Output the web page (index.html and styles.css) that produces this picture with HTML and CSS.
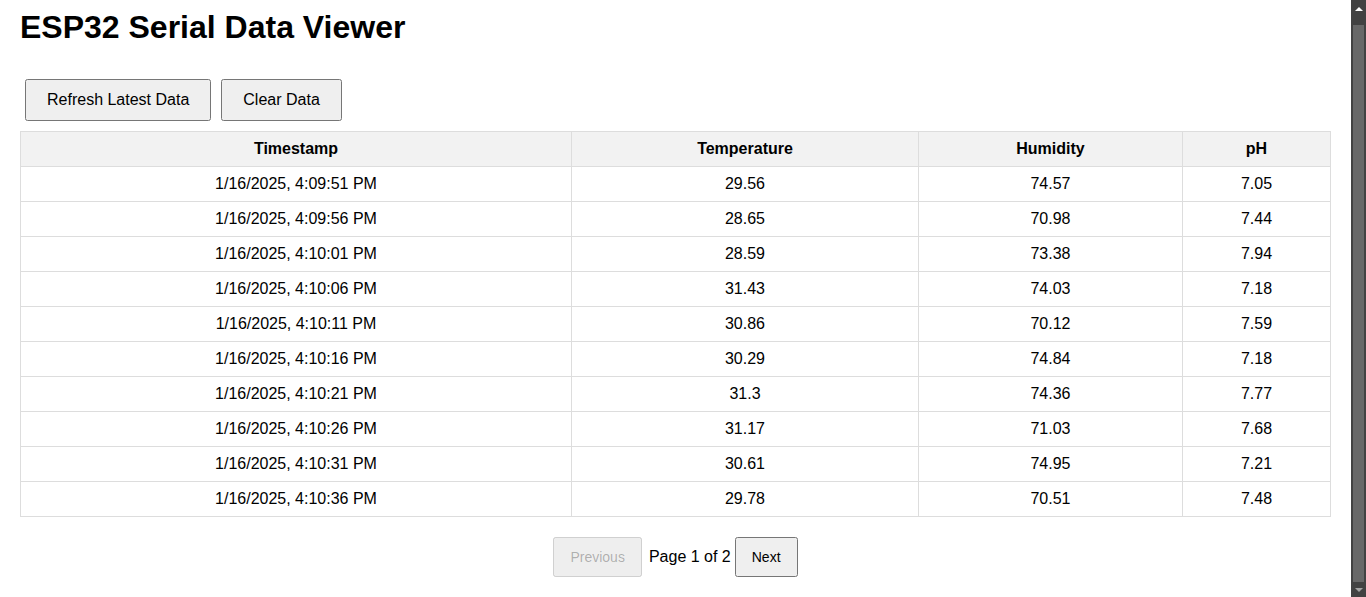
FILE: index.html
```html
<!DOCTYPE html>
<html lang="en">
<head>
<meta charset="utf-8">
<title>ESP32 Serial Data Viewer</title>
<link rel="stylesheet" href="styles.css">
</head>
<body>
<h1 class="title">ESP32 Serial Data Viewer</h1>
<div class="controls">
  <button class="btn">Refresh Latest Data</button>
  <button class="btn">Clear Data</button>
</div>
<table class="data-table">
  <thead>
    <tr>
      <th class="col-time">Timestamp</th>
      <th class="col-temp">Temperature</th>
      <th class="col-hum">Humidity</th>
      <th class="col-ph">pH</th>
    </tr>
  </thead>
  <tbody>
    <tr><td>1/16/2025, 4:09:51 PM</td><td>29.56</td><td>74.57</td><td>7.05</td></tr>
    <tr><td>1/16/2025, 4:09:56 PM</td><td>28.65</td><td>70.98</td><td>7.44</td></tr>
    <tr><td>1/16/2025, 4:10:01 PM</td><td>28.59</td><td>73.38</td><td>7.94</td></tr>
    <tr><td>1/16/2025, 4:10:06 PM</td><td>31.43</td><td>74.03</td><td>7.18</td></tr>
    <tr><td>1/16/2025, 4:10:11 PM</td><td>30.86</td><td>70.12</td><td>7.59</td></tr>
    <tr><td>1/16/2025, 4:10:16 PM</td><td>30.29</td><td>74.84</td><td>7.18</td></tr>
    <tr><td>1/16/2025, 4:10:21 PM</td><td>31.3</td><td>74.36</td><td>7.77</td></tr>
    <tr><td>1/16/2025, 4:10:26 PM</td><td>31.17</td><td>71.03</td><td>7.68</td></tr>
    <tr><td>1/16/2025, 4:10:31 PM</td><td>30.61</td><td>74.95</td><td>7.21</td></tr>
    <tr><td>1/16/2025, 4:10:36 PM</td><td>29.78</td><td>70.51</td><td>7.48</td></tr>
  </tbody>
</table>
<div class="pagination">
  <button class="page-btn" disabled>Previous</button>
  <span class="page-info">Page 1 of 2</span>
  <button class="page-btn">Next</button>
</div>
<div class="scrollbar" aria-hidden="true">
  <div class="sb-arrow"><span class="tri-up"></span></div>
  <div class="sb-thumb"></div>
  <div class="sb-arrow sb-arrow-down"><span class="tri-down"></span></div>
</div>
</body>
</html>
```
FILE: styles.css
```css
html {
  background: #ffffff;
}
body {
  margin: 0;
  padding: 0 35px 24px 20px;
  background: #ffffff;
  color: #000000;
  font-family: "Liberation Sans", Arial, sans-serif;
}
.title {
  margin: 9px 0 0;
  font-size: 32px;
  line-height: 37px;
  font-weight: bold;
}
.controls {
  margin-top: 28px;
  display: flex;
  height: 57px;
  align-items: flex-start;
}
.btn {
  margin: 5px;
  padding: 10px 20px;
  font-family: "Liberation Sans", Arial, sans-serif;
  font-size: 16px;
  cursor: pointer;
}
.data-table {
  width: 100%;
  border-collapse: collapse;
  table-layout: fixed;
  font-size: 16px;
}
.data-table th,
.data-table td {
  border: 1px solid #dddddd;
  padding: 8px;
  text-align: center;
  line-height: 18px;
}
.data-table th {
  background: #f2f2f2;
  font-weight: bold;
}
.col-time { width: 534px; }
.col-temp { width: 330px; }
.col-hum { width: 247px; }
.col-ph { width: 131px; }
.pagination {
  margin-top: 20px;
  display: flex;
  justify-content: center;
  align-items: center;
}
.page-btn {
  padding: 10px 15px;
  font-family: "Liberation Sans", Arial, sans-serif;
  font-size: 14px;
  line-height: 16px;
}
.page-info {
  margin: 0 4px 0 7px;
  font-size: 16px;
}
.scrollbar {
  position: fixed;
  top: 0;
  right: 0;
  width: 15px;
  height: 100%;
  background: #424242;
  display: flex;
  flex-direction: column;
}
.sb-arrow {
  height: 17px;
  display: flex;
  justify-content: center;
  align-items: center;
  flex: none;
}
.sb-arrow-down {
  flex: 1;
  align-items: center;
}
.tri-up {
  width: 0;
  height: 0;
  border-left: 4px solid transparent;
  border-right: 4px solid transparent;
  border-bottom: 4px solid #ffffff;
}
.tri-down {
  width: 0;
  height: 0;
  border-left: 4px solid transparent;
  border-right: 4px solid transparent;
  border-top: 4px solid #a3a3a3;
}
.sb-thumb {
  margin: 8px 2px 0;
  height: 557px;
  background: #686868;
  flex: none;
}
```
